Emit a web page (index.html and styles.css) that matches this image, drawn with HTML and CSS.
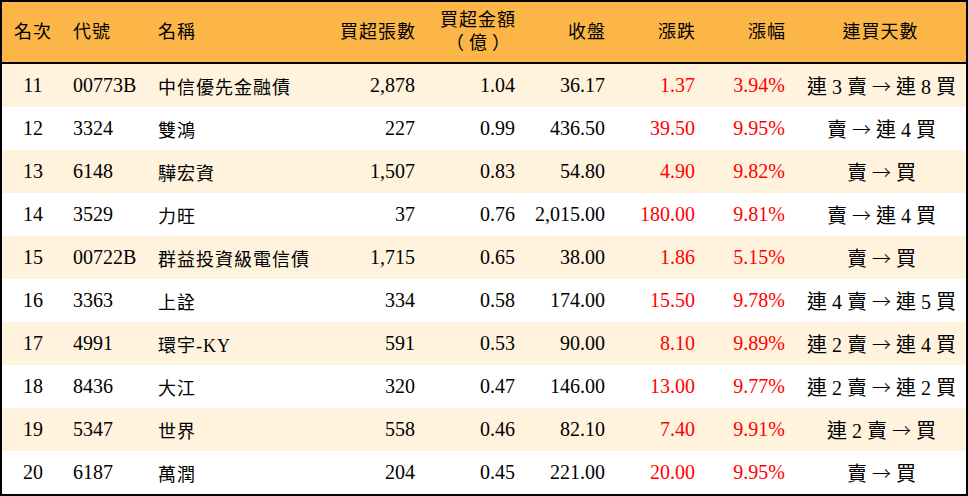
FILE: index.html
```html
<!DOCTYPE html>
<html lang="zh-Hant">
<head>
<meta charset="utf-8">
<link rel="stylesheet" href="styles.css">
</head>
<body>
<div class="frame">
<table class="rank">
<colgroup>
<col class="c1"><col class="c2"><col class="c3"><col class="c4"><col class="c5"><col class="c6"><col class="c7"><col class="c8"><col class="c9">
</colgroup>
<thead>
<tr>
<th class="ctr">名次</th>
<th class="lft">代號</th>
<th class="lft name">名稱</th>
<th class="rgt">買超張數</th>
<th class="rgt">買超金額<br><span class="unit">（億）</span></th>
<th class="rgt">收盤</th>
<th class="rgt">漲跌</th>
<th class="rgt">漲幅</th>
<th class="ctr">連買天數</th>
</tr>
</thead>
<tbody>
<tr><td class="ctr">11</td><td class="lft">00773B</td><td class="lft name">中信優先金融債</td><td class="rgt">2,878</td><td class="rgt">1.04</td><td class="rgt">36.17</td><td class="rgt up">1.37</td><td class="rgt up">3.94%</td><td class="ctr days">連 3 賣 <span class="arr">→</span> 連 8 買</td></tr>
<tr><td class="ctr">12</td><td class="lft">3324</td><td class="lft name">雙鴻</td><td class="rgt">227</td><td class="rgt">0.99</td><td class="rgt">436.50</td><td class="rgt up">39.50</td><td class="rgt up">9.95%</td><td class="ctr days">賣 <span class="arr">→</span> 連 4 買</td></tr>
<tr><td class="ctr">13</td><td class="lft">6148</td><td class="lft name">驊宏資</td><td class="rgt">1,507</td><td class="rgt">0.83</td><td class="rgt">54.80</td><td class="rgt up">4.90</td><td class="rgt up">9.82%</td><td class="ctr days">賣 <span class="arr">→</span> 買</td></tr>
<tr><td class="ctr">14</td><td class="lft">3529</td><td class="lft name">力旺</td><td class="rgt">37</td><td class="rgt">0.76</td><td class="rgt">2,015.00</td><td class="rgt up">180.00</td><td class="rgt up">9.81%</td><td class="ctr days">賣 <span class="arr">→</span> 連 4 買</td></tr>
<tr><td class="ctr">15</td><td class="lft">00722B</td><td class="lft name">群益投資級電信債</td><td class="rgt">1,715</td><td class="rgt">0.65</td><td class="rgt">38.00</td><td class="rgt up">1.86</td><td class="rgt up">5.15%</td><td class="ctr days">賣 <span class="arr">→</span> 買</td></tr>
<tr><td class="ctr">16</td><td class="lft">3363</td><td class="lft name">上詮</td><td class="rgt">334</td><td class="rgt">0.58</td><td class="rgt">174.00</td><td class="rgt up">15.50</td><td class="rgt up">9.78%</td><td class="ctr days">連 4 賣 <span class="arr">→</span> 連 5 買</td></tr>
<tr><td class="ctr">17</td><td class="lft">4991</td><td class="lft name">環宇-KY</td><td class="rgt">591</td><td class="rgt">0.53</td><td class="rgt">90.00</td><td class="rgt up">8.10</td><td class="rgt up">9.89%</td><td class="ctr days">連 2 賣 <span class="arr">→</span> 連 4 買</td></tr>
<tr><td class="ctr">18</td><td class="lft">8436</td><td class="lft name">大江</td><td class="rgt">320</td><td class="rgt">0.47</td><td class="rgt">146.00</td><td class="rgt up">13.00</td><td class="rgt up">9.77%</td><td class="ctr days">連 2 賣 <span class="arr">→</span> 連 2 買</td></tr>
<tr><td class="ctr">19</td><td class="lft">5347</td><td class="lft name">世界</td><td class="rgt">558</td><td class="rgt">0.46</td><td class="rgt">82.10</td><td class="rgt up">7.40</td><td class="rgt up">9.91%</td><td class="ctr days">連 2 賣 <span class="arr">→</span> 買</td></tr>
<tr><td class="ctr">20</td><td class="lft">6187</td><td class="lft name">萬潤</td><td class="rgt">204</td><td class="rgt">0.45</td><td class="rgt">221.00</td><td class="rgt up">20.00</td><td class="rgt up">9.95%</td><td class="ctr days">賣 <span class="arr">→</span> 買</td></tr>
</tbody>
</table>
</div>
</body>
</html>
```
FILE: styles.css
```css
html, body {
  margin: 0;
  padding: 0;
  background: #ffffff;
}
.frame {
  width: 968px;
  height: 496px;
  box-sizing: border-box;
  border: 2px solid #000000;
  overflow: hidden;
}
.rank {
  width: 964px;
  border-collapse: collapse;
  table-layout: fixed;
  font-family: "Liberation Serif", "Noto Sans CJK TC", serif;
  font-size: 20px;
  color: #000000;
}
.c1 { width: 62px; }
.c2 { width: 86px; }
.c3 { width: 180px; }
.c4 { width: 95px; }
.c5 { width: 100px; }
.c6 { width: 90px; }
.c7 { width: 90px; }
.c8 { width: 90px; }
.c9 { width: 171px; }
.rank th {
  height: 60px;
  padding: 0;
  background: #fbb647;
  border-bottom: 2px solid #000000;
  font-weight: normal;
  font-size: 18px;
  letter-spacing: 1px;
  line-height: 21px;
  vertical-align: middle;
}
.unit {
  display: inline-block;
  letter-spacing: 5px;
  padding-right: 1px;
  font-family: "Noto Sans CJK TC", sans-serif;
}
.rank td {
  height: 43px;
  padding: 0;
  vertical-align: middle;
  white-space: nowrap;
}
.rank tbody tr:nth-child(odd) td {
  background: #fff3de;
}
.ctr { text-align: center; }
.lft { text-align: left; }
.rgt { text-align: right; }
th.lft, td.lft { padding-left: 9px; }
th.name, td.name { padding-left: 8px; }
th.rgt, td.rgt { padding-right: 10px; }
th.rgt { padding-right: 9px; }
td.name {
  font-size: 18px;
  letter-spacing: 1px;
}
td.up { color: #ff0000; }
td.days {
  padding-left: 2px;
}
.arr {
  font-family: "Noto Sans CJK TC", sans-serif;
  font-size: 19px;
  font-weight: 300;
}
```
